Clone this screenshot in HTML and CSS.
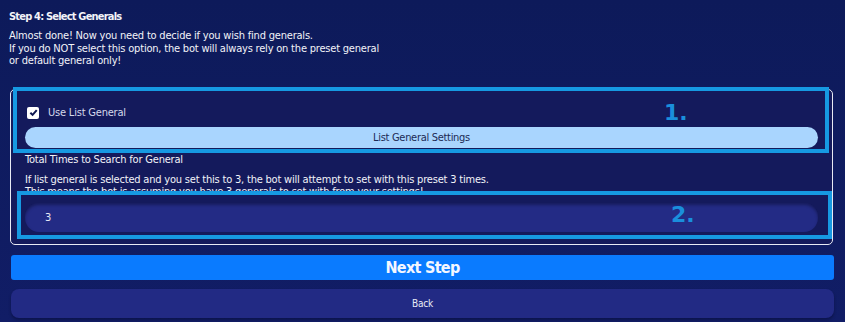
FILE: index.html
```html
<html lang="en">
<head>
<meta charset="UTF-8" />
<meta name="viewport" content="width=device-width, initial-scale=1.0" />
<title>Step 4: Select Generals</title>
<link rel="stylesheet" href="styles.css">
</head>
<body>

<div class="main">
  <h1 class="step-title">Step 4: Select Generals</h1>
  <p class="intro">
    Almost done! Now you need to decide if you wish find generals.<br>
    If you do NOT select this option, the bot will always rely on the preset general<br>
    or default general only!
  </p>

  <!-- Настройки генерала -->
  <div class="frame">
    <label class="check-row">
      <span class="checkbox">
        <svg width="9" height="9" viewBox="0 0 10 10"><path d="M1.5 5.2 L4 7.6 L8.6 2.4" fill="none" stroke="#0d1650" stroke-width="2.2"/></svg>
      </span>
      Use List General
    </label>
    <button class="pill-btn">List General Settings</button>

    <div class="field-title">Total Times to Search for General</div>
    <div class="field-help">
      If list general is selected and you set this to 3, the bot will attempt to set with this preset 3 times.<br>
      This means the bot is assuming you have 3 generals to set with from your settings!
    </div>
    <div class="num-input">3</div>

    <!-- Пометки поверх -->
    <div class="mark mark-1"></div>
    <div class="mark mark-2"></div>
    <span class="mark-num num-1">1.</span>
    <span class="mark-num num-2">2.</span>
  </div>

  <button class="next-btn">Next Step</button>
  <button class="back-btn">Back</button>
</div>

</body>
</html>
```

FILE: styles.css
```css
body {
  font-family: "Liberation Sans Narrow", "DejaVu Sans Condensed", sans-serif;
  background: linear-gradient(#0d1a5a, #111d66);
  color: #f2f3f8;
  margin: 0;
  padding: 0;
  height: 322px;
  overflow: hidden;
}
.main {
  padding: 9px 12px 0 10px;
}
.step-title {
  font-size: 11px;
  font-weight: bold;
  letter-spacing: -0.8px;
  line-height: 16px;
  margin: 0 0 0 -1px;
}
.intro {
  font-size: 11px;
  letter-spacing: -0.2px;
  line-height: 12.5px;
  margin: 5px 0 0 -1px;
}
.frame {
  position: relative;
  margin-top: 21px;
  border: 1px solid #e8eaf4;
  border-radius: 5px;
  padding: 17px 14px 12px 14px;
  background-color: #141a5c;
}
.check-row {
  display: flex;
  align-items: center;
  gap: 9px;
  font-size: 11px;
  letter-spacing: -0.2px;
  line-height: 12px;
  color: #d6d9ea;
  height: 12px;
  padding-left: 2px;
}
.checkbox {
  width: 12px;
  height: 12px;
  background-color: #fff;
  border-radius: 2px;
  display: flex;
  align-items: center;
  justify-content: center;
}
.pill-btn {
  display: block;
  width: 100%;
  height: 21px;
  margin-top: 8px;
  border: none;
  border-radius: 11px;
  background-color: #a9d5fe;
  color: #1c2a55;
  font-family: inherit;
  font-size: 11px;
  letter-spacing: -0.3px;
  padding: 0;
}
.field-title {
  margin-top: 5px;
  font-size: 11px;
  letter-spacing: -0.2px;
  line-height: 14px;
}
.field-help {
  margin-top: 7px;
  font-size: 11px;
  letter-spacing: -0.2px;
  line-height: 12px;
}
.num-input {
  position: relative;
  z-index: 2;
  margin-top: 5px;
  height: 29px;
  line-height: 29px;
  border-radius: 14px;
  background-color: #232b85;
  box-shadow: inset 0 2px 3px rgba(0, 0, 20, 0.35);
  padding-left: 20px;
  font-size: 11px;
  color: #e6e8f4;
}
.mark {
  position: absolute;
  box-sizing: border-box;
  border: 4px solid #1699e2;
}
.mark-1 {
  left: 2px;
  top: -3px;
  width: 816px;
  height: 66px;
}
.mark-2 {
  z-index: 1;
  left: 6px;
  top: 101px;
  width: 815px;
  height: 48px;
  background-color: #141a5c;
}
.mark-num {
  position: absolute;
  z-index: 3;
  font-family: "DejaVu Sans", sans-serif;
  font-weight: bold;
  font-size: 22px;
  line-height: 22px;
  color: #1a8fdc;
}
.num-1 {
  left: 653px;
  top: 12px;
}
.num-2 {
  left: 660px;
  top: 114px;
}
button {
  cursor: pointer;
}
.next-btn {
  display: block;
  width: 823px;
  height: 25px;
  margin: 10px 0 0 1px;
  border: none;
  border-radius: 3px;
  background-color: #0a7bff;
  color: #f4f7ff;
  font-family: inherit;
  font-weight: bold;
  font-size: 16px;
  letter-spacing: -0.7px;
  padding: 0;
}
.back-btn {
  display: block;
  width: 823px;
  height: 29px;
  margin: 9px 0 0 1px;
  border: none;
  border-radius: 8px;
  background-color: #222a84;
  box-shadow: 0 2px 3px rgba(0, 0, 20, 0.3);
  color: #e8eaf6;
  font-family: inherit;
  font-size: 10px;
  letter-spacing: -0.2px;
  padding: 0;
}
```
